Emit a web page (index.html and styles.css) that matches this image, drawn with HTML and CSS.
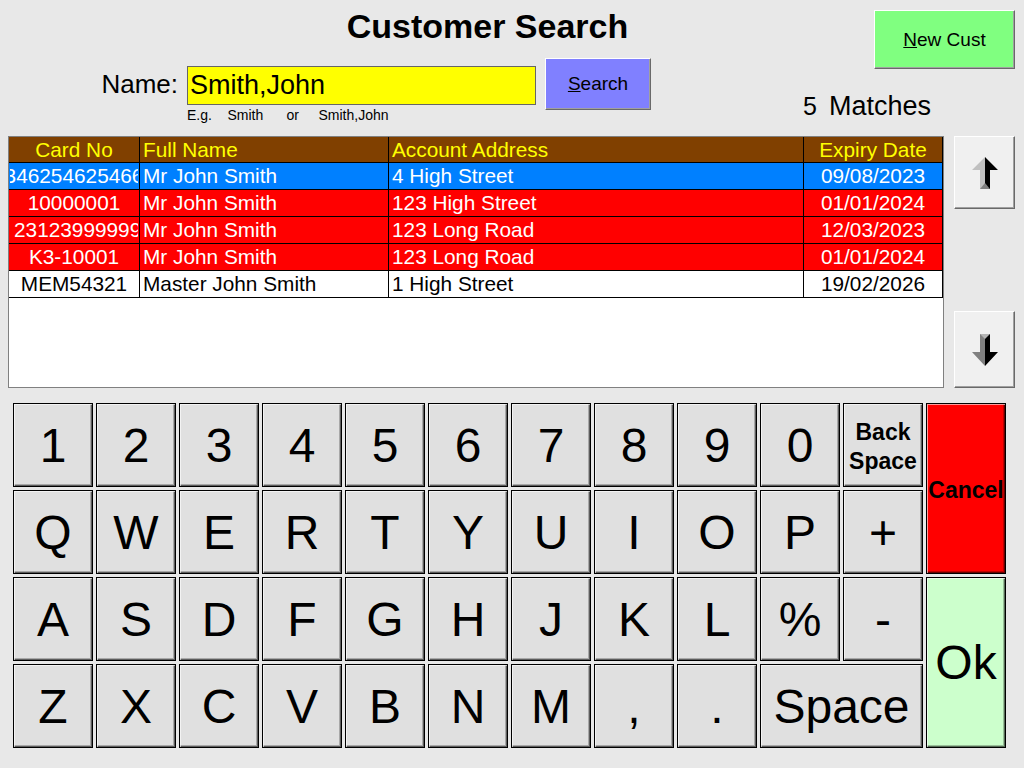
FILE: index.html
```html
<!DOCTYPE html>
<html>
<head>
  <title>Customer Search</title>
  <link rel="stylesheet" href="styles.css">
</head>
<body>
  <div class="screen">
    <header class="top">
      <h1 class="title">Customer Search</h1>
      <button class="btn new-cust"><u>N</u>ew Cust</button>
      <label class="name-label" for="custName">Name:</label>
      <div class="name-input" id="custName">Smith,John</div>
      <button class="btn search-btn"><u>S</u>earch</button>
      <div class="matches"><span class="count">5</span>Matches</div>
      <div class="hint">E.g.    Smith      or     Smith,John</div>
    </header>

    <section class="results">
      <div class="grid-box">
        <table class="cust-table">
          <colgroup>
            <col class="col-card">
            <col class="col-name">
            <col class="col-addr">
            <col class="col-expiry">
          </colgroup>
          <thead>
            <tr class="head-row">
              <th class="center">Card No</th>
              <th>Full Name</th>
              <th>Account Address</th>
              <th class="center">Expiry Date</th>
            </tr>
          </thead>
          <tbody>
            <tr class="sel">
              <td class="card"><div class="clip">346254625466</div></td>
              <td>Mr John Smith</td>
              <td>4 High Street</td>
              <td class="center">09/08/2023</td>
            </tr>
            <tr class="warn">
              <td class="card"><div class="clip">10000001</div></td>
              <td>Mr John Smith</td>
              <td>123 High Street</td>
              <td class="center">01/01/2024</td>
            </tr>
            <tr class="warn">
              <td class="card"><div class="clip clip-start">231239999999</div></td>
              <td>Mr John Smith</td>
              <td>123 Long Road</td>
              <td class="center">12/03/2023</td>
            </tr>
            <tr class="warn">
              <td class="card"><div class="clip">K3-10001</div></td>
              <td>Mr John Smith</td>
              <td>123 Long Road</td>
              <td class="center">01/01/2024</td>
            </tr>
            <tr class="plain">
              <td class="card"><div class="clip">MEM54321</div></td>
              <td>Master John Smith</td>
              <td>1 High Street</td>
              <td class="center">19/02/2026</td>
            </tr>
          </tbody>
        </table>
      </div>

      <div class="scroll">
        <button class="scroll-btn up-btn">
          <svg width="26" height="32" viewBox="0 0 26 32">
            <polygon points="13,0 0,13 8,13 8,32 13,32" fill="#c0c0c0"/>
            <polygon points="13,0 26,13 18,13 18,32 13,32" fill="#000"/>
            <polygon points="8,32 13,26 18,32" fill="#808080"/>
          </svg>
        </button>
        <button class="scroll-btn down-btn">
          <svg width="26" height="32" viewBox="0 0 26 32">
            <polygon points="8,0 13,0 13,32 0,18 8,18" fill="#808080"/>
            <polygon points="13,0 18,0 18,18 26,18 13,32" fill="#000"/>
            <polygon points="8,0 18,0 13,5" fill="#b4b4b4"/>
          </svg>
        </button>
      </div>
    </section>

    <section class="keys">
      <button class="key">1</button>
      <button class="key">2</button>
      <button class="key">3</button>
      <button class="key">4</button>
      <button class="key">5</button>
      <button class="key">6</button>
      <button class="key">7</button>
      <button class="key">8</button>
      <button class="key">9</button>
      <button class="key">0</button>
      <button class="key key-small">Back<br>Space</button>
      <button class="key cancel">Cancel</button>

      <button class="key">Q</button>
      <button class="key">W</button>
      <button class="key">E</button>
      <button class="key">R</button>
      <button class="key">T</button>
      <button class="key">Y</button>
      <button class="key">U</button>
      <button class="key">I</button>
      <button class="key">O</button>
      <button class="key">P</button>
      <button class="key">+</button>

      <button class="key">A</button>
      <button class="key">S</button>
      <button class="key">D</button>
      <button class="key">F</button>
      <button class="key">G</button>
      <button class="key">H</button>
      <button class="key">J</button>
      <button class="key">K</button>
      <button class="key">L</button>
      <button class="key">%</button>
      <button class="key">-</button>
      <button class="key ok">Ok</button>

      <button class="key">Z</button>
      <button class="key">X</button>
      <button class="key">C</button>
      <button class="key">V</button>
      <button class="key">B</button>
      <button class="key">N</button>
      <button class="key">M</button>
      <button class="key">,</button>
      <button class="key">.</button>
      <button class="key space">Space</button>
    </section>
  </div>
</body>
</html>
```

FILE: styles.css
```css
body {
  margin: 0;
  background: #e8e8e8;
  font-family: "Liberation Sans", Arial, sans-serif;
  color: #000;
}

.screen {
  width: 1024px;
  height: 768px;
  overflow: hidden;
}

/* Header */
.top {
  display: grid;
  grid-template-columns: 187px 349px 9px 106px 1fr 141px;
  grid-template-rows: 58px 52px 20px;
  padding-right: 9px;
}

.title {
  grid-column: 1 / 6;
  grid-row: 1;
  align-self: start;
  margin: 6px 0 0;
  padding-left: 101px;
  text-align: center;
  font-size: 34px;
  line-height: 40px;
  font-weight: bold;
}

.btn {
  font-family: inherit;
  font-size: 19px;
  color: #000;
  padding: 0;
  border: 1px solid;
  border-color: #fff #696969 #696969 #fff;
  box-shadow: inset -1px -1px 0 #a0a0a0;
}

.new-cust {
  grid-column: 6;
  grid-row: 1 / 3;
  align-self: start;
  margin-top: 10px;
  height: 59px;
  background: #80ff80;
}

.name-label {
  grid-column: 1;
  grid-row: 2;
  justify-self: end;
  align-self: center;
  margin-right: 9px;
  font-size: 26px;
}

.name-input {
  grid-column: 2;
  grid-row: 2;
  align-self: start;
  margin-top: 8px;
  height: 39px;
  box-sizing: border-box;
  border: 1px solid #666;
  background: #ffff00;
  padding-left: 2px;
  font-size: 27px;
  line-height: 37px;
}

.search-btn {
  grid-column: 4;
  grid-row: 2;
  background: #8080ff;
}

.matches {
  grid-column: 5 / 7;
  grid-row: 2 / 4;
  justify-self: end;
  align-self: end;
  margin: 0 84px 9px 0;
  font-size: 27px;
  line-height: 30px;
  white-space: nowrap;
}

.matches .count {
  display: inline-block;
  margin-right: 12px;
  font-size: 25px;
}

.hint {
  grid-column: 2 / 5;
  grid-row: 3;
  margin-top: -2px;
  font-size: 14px;
  line-height: 14px;
  white-space: pre;
}

/* Results grid */
.results {
  display: flex;
  margin-top: 6px;
  padding-left: 8px;
  height: 252px;
}

.grid-box {
  width: 936px;
  box-sizing: border-box;
  border: 1px solid #808080;
  background: #fff;
  overflow: hidden;
}

.cust-table {
  width: 934px;
  table-layout: fixed;
  border-collapse: separate;
  border-spacing: 0;
  font-size: 20.8px;
}

.col-card { width: 131px; }
.col-name { width: 249px; }
.col-addr { width: 415px; }
.col-expiry { width: 139px; }

.cust-table th,
.cust-table td {
  border-right: 1px solid #000;
  border-bottom: 1px solid #000;
  padding: 0 3px;
  white-space: nowrap;
  overflow: hidden;
  text-align: left;
  line-height: 26px;
}

.cust-table th {
  font-weight: normal;
  line-height: 25px;
  color: #ffff00;
}

.cust-table .center {
  text-align: center;
}

.cust-table td.card {
  padding: 0 1px;
}

.clip {
  display: flex;
  justify-content: center;
  overflow: hidden;
  white-space: nowrap;
}

.clip-start {
  justify-content: flex-start;
  padding-left: 4px;
}

.head-row {
  background: #804000;
}

.sel {
  background: #0080ff;
  color: #fff;
}

.warn {
  background: #ff0000;
  color: #fff;
}

.plain {
  background: #fff;
}

/* Scroll buttons */
.scroll {
  display: flex;
  flex-direction: column;
  justify-content: space-between;
  width: 61px;
  margin-left: 10px;
}

.scroll-btn {
  display: flex;
  align-items: center;
  justify-content: center;
  padding: 0;
  background: #f0f0f0;
  border: 1px solid;
  border-color: #fff #696969 #696969 #fff;
  box-shadow: inset -1px -1px 0 #a0a0a0;
}

.up-btn {
  height: 73px;
}

.down-btn {
  height: 77px;
}

/* Keyboard */
.keys {
  display: grid;
  grid-template-columns: repeat(12, 80px);
  grid-template-rows: repeat(4, 84px);
  gap: 3px;
  margin-top: 15px;
  padding-left: 13px;
}

.key {
  display: flex;
  align-items: center;
  justify-content: center;
  padding: 0;
  border: 1px solid #000;
  background: #e0e0e0;
  box-shadow: inset 1px 1px 0 rgba(255, 255, 255, 0.6),
              inset -1px -1px 0 rgba(0, 0, 0, 0.45),
              inset -2px -2px 0 rgba(0, 0, 0, 0.25);
  font-family: inherit;
  font-size: 48px;
  color: #000;
}

.key-small {
  padding-top: 4px;
  font-size: 23px;
  font-weight: bold;
  line-height: 29px;
}

.cancel {
  grid-column: 12;
  grid-row: 1 / 3;
  padding-top: 4px;
  background: #ff0000;
  font-size: 23px;
  font-weight: bold;
  overflow: visible;
}

.ok {
  grid-column: 12;
  grid-row: 3 / 5;
  background: #ccffcc;
}

.space {
  grid-column: 10 / 12;
}
```
